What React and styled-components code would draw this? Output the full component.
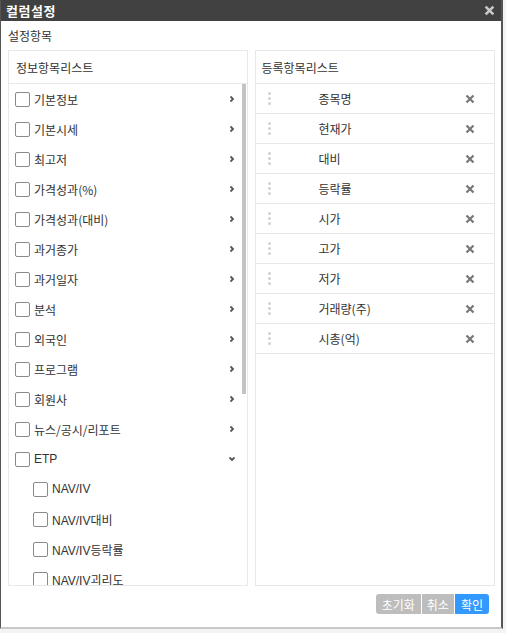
import React from 'react';
import styled, { createGlobalStyle } from 'styled-components';

const GlobalStyle = createGlobalStyle`
  html, body {
    margin: 0;
    padding: 0;
    background: #f4f4f4;
  }
  body {
    font-family: "Noto Sans CJK KR", "Noto Sans", sans-serif;
    font-size: 12px;
    color: #333;
  }
`;

const Dialog = styled.div`
  width: 503px;
  height: 629px;
  box-sizing: border-box;
  background: #fff;
  border-left: 1px solid #555;
  border-right: 2px solid #555;
  border-bottom: 2px solid #c8c8c8;
  display: flex;
  flex-direction: column;
`;

const TitleBar = styled.div`
  height: 21px;
  background: #414141;
  display: flex;
  align-items: center;
  justify-content: space-between;
  padding: 0 6px 0 5px;
  flex-shrink: 0;
`;

const Title = styled.div`
  color: #fff;
  font-size: 13px;
  font-weight: 700;
  letter-spacing: 0.5px;
`;

const CloseBtn = styled.button`
  border: 0;
  background: none;
  padding: 0;
  display: flex;
  cursor: pointer;
`;

const Body = styled.div`
  flex: 1;
  display: flex;
  flex-direction: column;
  padding: 5px 6px 8px 7px;
  min-height: 0;
`;

const SectionLabel = styled.div`
  height: 24px;
  line-height: 20px;
`;

const Panels = styled.div`
  display: flex;
  gap: 7px;
  height: 536px;
`;

const Panel = styled.div`
  width: ${p => p.$width}px;
  border: 1px solid #e8e8e8;
  box-sizing: border-box;
  display: flex;
  flex-direction: column;
  min-height: 0;
`;

const PanelHeader = styled.div`
  height: 32px;
  flex-shrink: 0;
  border-bottom: 1px solid #e8e8e8;
  display: flex;
  align-items: center;
  padding-left: ${p => p.$pad}px;
`;

const ScrollArea = styled.div`
  flex: 1;
  display: flex;
  min-height: 0;
`;

const ListBox = styled.div`
  flex: 1;
  overflow: hidden;
`;

const Track = styled.div`
  width: 4px;
  margin-right: 1px;
`;

const Thumb = styled.div`
  height: 310px;
  background: #c3c3c3;
`;

const ItemRow = styled.div`
  height: 30px;
  display: flex;
  align-items: center;
  padding-left: ${p => (p.$sub ? 24 : 6)}px;
  padding-right: 4px;
`;

const Check = styled.span`
  width: 13px;
  height: 13px;
  border: 1px solid #8a8a8a;
  border-radius: 2px;
  background: #fff;
  flex-shrink: 0;
  margin-right: 4px;
`;

const ItemLabel = styled.span`
  flex: 1;
  font-family: ${p => (p.$latin ? '"Liberation Sans", "Noto Sans CJK KR", sans-serif' : 'inherit')};
  color: #333;
`;

const Arrow = styled.span`
  width: 12px;
  display: flex;
  justify-content: center;
`;

const RegRow = styled.div`
  height: 30px;
  box-sizing: border-box;
  border-bottom: 1px solid #e8e8e8;
  display: flex;
  align-items: center;
  padding: 0 19px 0 12px;
`;

const Grip = styled.span`
  width: 4px;
  display: flex;
  flex-direction: column;
  gap: 2px;
  & > i {
    width: 3px;
    height: 3px;
    border-radius: 50%;
    background: #d2d2d2;
  }
`;

const RegLabel = styled.span`
  flex: 1;
  padding-left: 47px;
`;

const Footer = styled.div`
  display: flex;
  justify-content: flex-end;
  padding-top: 8px;
  padding-right: 6px;
`;

const Btn = styled.button`
  height: 20px;
  border: 0;
  padding: 0 ${p => p.$px}px;
  font-family: inherit;
  font-size: 12px;
  color: #fff;
  background: ${p => (p.$primary ? '#3399ff' : '#bdbdbd')};
  border-radius: ${p => p.$radius};
  margin-left: 1px;
  cursor: pointer;
`;

const Chevron = ({ down }) => (
  <svg width="8" height="8" viewBox="0 0 8 8">
    {down ? (
      <path d="M1.5 2.5 L4 5 L6.5 2.5" stroke="#555" strokeWidth="1.8" fill="none" />
    ) : (
      <path d="M2.5 1.5 L5 4 L2.5 6.5" stroke="#555" strokeWidth="1.8" fill="none" />
    )}
  </svg>
);

const XIcon = ({ size = 10, color = '#777', w = 2.2 }) => (
  <svg width={size} height={size} viewBox="0 0 10 10">
    <path d="M1.5 1.5 L8.5 8.5 M8.5 1.5 L1.5 8.5" stroke={color} strokeWidth={w} />
  </svg>
);

const infoItems = [
  { label: '기본정보' },
  { label: '기본시세' },
  { label: '최고저' },
  { label: '가격성과(%)' },
  { label: '가격성과(대비)' },
  { label: '과거종가' },
  { label: '과거일자' },
  { label: '분석' },
  { label: '외국인' },
  { label: '프로그램' },
  { label: '회원사' },
  { label: '뉴스/공시/리포트' },
  { label: 'ETP', open: true, latin: true },
  { label: 'NAV/IV', sub: true },
  { label: 'NAV/IV대비', sub: true },
  { label: 'NAV/IV등락률', sub: true },
  { label: 'NAV/IV괴리도', sub: true }
];

const regItems = ['종목명', '현재가', '대비', '등락률', '시가', '고가', '저가', '거래량(주)', '시총(억)'];

const App = () => (
  <>
    <GlobalStyle />
    <Dialog>
      <TitleBar>
        <Title>컬럼설정</Title>
        <CloseBtn>
          <XIcon size={11} color="#c8c8c8" w={2.4} />
        </CloseBtn>
      </TitleBar>
      <Body>
        <SectionLabel>설정항목</SectionLabel>
        <Panels>
          <Panel $width={241}>
            <PanelHeader $pad={7}>정보항목리스트</PanelHeader>
            <ScrollArea>
              <ListBox>
                {infoItems.map(item => (
                  <ItemRow key={item.label} $sub={item.sub}>
                    <Check />
                    <ItemLabel $latin={item.latin || item.label.startsWith('NAV')}>{item.label}</ItemLabel>
                    {!item.sub && (
                      <Arrow>
                        <Chevron down={item.open} />
                      </Arrow>
                    )}
                  </ItemRow>
                ))}
              </ListBox>
              <Track>
                <Thumb />
              </Track>
            </ScrollArea>
          </Panel>
          <Panel $width={242}>
            <PanelHeader $pad={6}>등록항목리스트</PanelHeader>
            {regItems.map(label => (
              <RegRow key={label}>
                <Grip>
                  <i />
                  <i />
                  <i />
                </Grip>
                <RegLabel>{label}</RegLabel>
                <XIcon />
              </RegRow>
            ))}
          </Panel>
        </Panels>
        <Footer>
          <Btn $px={6} $radius="3px 0 0 3px">초기화</Btn>
          <Btn $px={5} $radius="0">취소</Btn>
          <Btn $px={6} $radius="0 3px 3px 0" $primary>
            확인
          </Btn>
        </Footer>
      </Body>
    </Dialog>
  </>
);

export default App;
